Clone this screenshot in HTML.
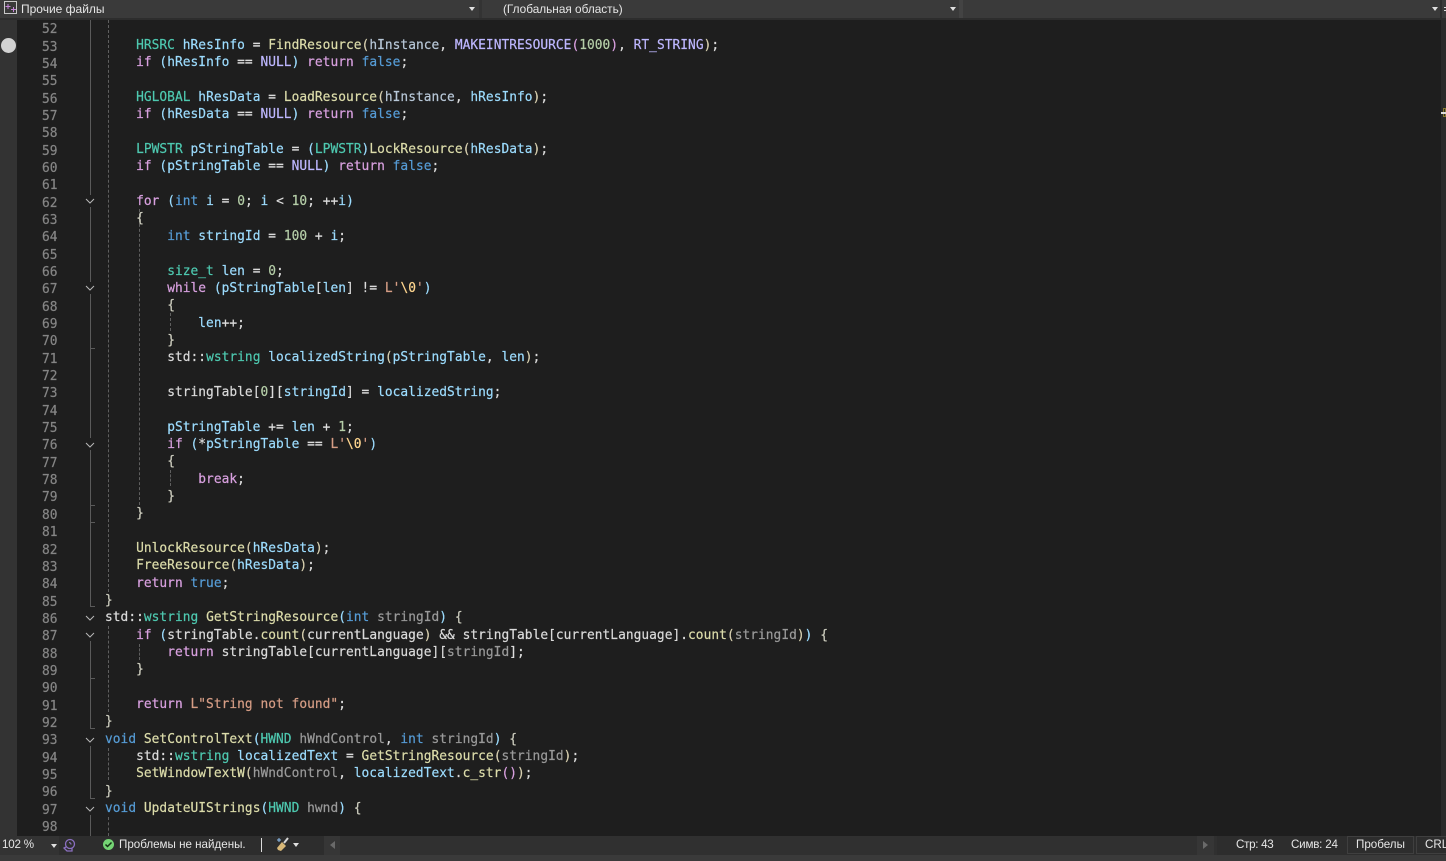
<!DOCTYPE html>
<html><head><meta charset="utf-8"><style>
html,body{margin:0;padding:0;background:#1e1e1e;width:1446px;height:861px;overflow:hidden}
.a{position:absolute}
pre{margin:0;font-family:"DejaVu Sans Mono",monospace;font-size:12.85px;line-height:17.34px;letter-spacing:.04px;color:#dcdcdc;-webkit-text-stroke:.2px}
.ui{font-family:"Liberation Sans",sans-serif;font-size:11.6px;line-height:14px;color:#e6e6e6;white-space:nowrap}
.k{color:#d8a0df}.b{color:#569cd6}.t{color:#4ec9b0}.f{color:#dcdcaa}.v{color:#9cdcfe}.m{color:#beb7ff}.p{color:#9a9a9a}.s{color:#d69d85}.n{color:#b5cea8}.g{color:#dadada}.y{color:#d8d0b0}.q{color:#ffd68f}.e{color:#cfcfc0}.h{color:#b8c8d8}
.fl{position:absolute;left:90px;width:1px;background:#5a5a5a}
.tk{position:absolute;left:90px;width:5px;height:1px;background:#5a5a5a}
.dg{position:absolute;width:0;border-left:1px dashed #5f5f5f}
.ar{position:absolute;width:0;height:0;border-left:3.5px solid transparent;border-right:3.5px solid transparent;border-top:4px solid #e0e0e0}
</style></head><body>
<div class="a" style="left:0;top:0;width:17px;height:861px;background:#333"></div>
<div class="a" style="left:1441px;top:20px;width:5px;height:816px;background:#2a2a2a"></div>
<div class="a" style="left:1443px;top:108px;width:3px;height:9px;border:1px solid #8a7a30;box-sizing:border-box"></div>
<div class="a" style="left:1441px;top:112px;width:5px;height:2px;background:#ddd"></div>
<div class="a" style="left:1px;top:38px;width:15px;height:15px;border-radius:50%;background:#d2d2d2"></div>

<pre class="a" style="left:42px;top:21.2px;color:#858585;height:815px;overflow:hidden">52
53
54
55
56
57
58
59
60
61
62
63
64
65
66
67
68
69
70
71
72
73
74
75
76
77
78
79
80
81
82
83
84
85
86
87
88
89
90
91
92
93
94
95
96
97
98</pre>

<div class="fl" style="top:20px;height:175px"></div>
<div class="fl" style="top:207px;height:75px"></div>
<div class="fl" style="top:294px;height:144px"></div>
<div class="fl" style="top:450px;height:156px"></div>
<div class="tk" style="top:348px"></div><div class="tk" style="top:505px"></div><div class="tk" style="top:522px"></div><div class="tk" style="top:606px"></div>
<div class="fl" style="top:641px;height:87px"></div><div class="tk" style="top:678px"></div><div class="tk" style="top:728px"></div>
<div class="fl" style="top:746px;height:52px"></div><div class="tk" style="top:798px"></div>
<div class="fl" style="top:815px;height:21px"></div>
<svg class="a" style="left:84px;top:0" width="13" height="836" fill="none" stroke="#b8b8b8" stroke-width="1">
<path d="M2 199l4 4 4-4M2 286l4 4 4-4M2 443l4 4 4-4M2 616l4 4 4-4M2 633l4 4 4-4M2 738l4 4 4-4M2 807l4 4 4-4"/></svg>
<div class="dg" style="left:108px;top:20px;height:572px"></div>
<div class="dg" style="left:108px;top:626px;height:86px"></div>
<div class="dg" style="left:108px;top:748px;height:32px"></div>
<div class="dg" style="left:108px;top:817px;height:19px"></div>
<div class="dg" style="left:139px;top:209px;height:296px"></div>
<div class="dg" style="left:139px;top:644px;height:16px"></div>
<div class="dg" style="left:170px;top:313px;height:18px"></div>
<div class="dg" style="left:170px;top:470px;height:16px"></div>

<pre class="a" style="left:105px;top:19.7px;height:816px;overflow:hidden">

    <span class="t">HRSRC</span> <span class="v">hResInfo</span> = <span class="f">FindResource</span><span class="y">(</span><span class="h">hInstance</span>, <span class="m">MAKEINTRESOURCE</span><span class="k">(</span><span class="n">1000</span><span class="k">)</span>, <span class="m">RT_STRING</span><span class="y">)</span>;
    <span class="k">if</span> <span class="v">(</span><span class="v">hResInfo</span> == <span class="m">NULL</span><span class="v">)</span> <span class="k">return</span> <span class="b">false</span>;

    <span class="t">HGLOBAL</span> <span class="v">hResData</span> = <span class="f">LoadResource</span><span class="y">(</span><span class="h">hInstance</span>, <span class="v">hResInfo</span><span class="y">)</span>;
    <span class="k">if</span> <span class="v">(</span><span class="v">hResData</span> == <span class="m">NULL</span><span class="v">)</span> <span class="k">return</span> <span class="b">false</span>;

    <span class="t">LPWSTR</span> <span class="v">pStringTable</span> = <span class="v">(</span><span class="t">LPWSTR</span><span class="v">)</span><span class="f">LockResource</span><span class="y">(</span><span class="v">hResData</span><span class="y">)</span>;
    <span class="k">if</span> <span class="v">(</span><span class="v">pStringTable</span> == <span class="m">NULL</span><span class="v">)</span> <span class="k">return</span> <span class="b">false</span>;

    <span class="k">for</span> <span class="v">(</span><span class="b">int</span> <span class="v">i</span> = <span class="n">0</span>; <span class="v">i</span> &lt; <span class="n">10</span>; ++<span class="v">i</span><span class="v">)</span>
    <span class="e">{</span>
        <span class="b">int</span> <span class="v">stringId</span> = <span class="n">100</span> + <span class="v">i</span>;

        <span class="t">size_t</span> <span class="v">len</span> = <span class="n">0</span>;
        <span class="k">while</span> <span class="v">(</span><span class="v">pStringTable</span>[<span class="v">len</span>] != <span class="s">L'</span><span class="q">\0</span><span class="s">'</span><span class="v">)</span>
        <span class="e">{</span>
            <span class="v">len</span>++;
        <span class="e">}</span>
        <span class="g">std</span>::<span class="t">wstring</span> <span class="v">localizedString</span><span class="y">(</span><span class="v">pStringTable</span>, <span class="v">len</span><span class="y">)</span>;

        <span class="g">stringTable</span>[<span class="n">0</span>][<span class="v">stringId</span>] = <span class="v">localizedString</span>;

        <span class="v">pStringTable</span> += <span class="v">len</span> + <span class="n">1</span>;
        <span class="k">if</span> <span class="v">(</span>*<span class="v">pStringTable</span> == <span class="s">L'</span><span class="q">\0</span><span class="s">'</span><span class="v">)</span>
        <span class="e">{</span>
            <span class="k">break</span>;
        <span class="e">}</span>
    <span class="e">}</span>

    <span class="f">UnlockResource</span><span class="y">(</span><span class="v">hResData</span><span class="y">)</span>;
    <span class="f">FreeResource</span><span class="y">(</span><span class="v">hResData</span><span class="y">)</span>;
    <span class="k">return</span> <span class="b">true</span>;
<span class="e">}</span>
<span class="g">std</span>::<span class="t">wstring</span> <span class="f">GetStringResource</span><span class="v">(</span><span class="b">int</span> <span class="p">stringId</span><span class="v">)</span> <span class="e">{</span>
    <span class="k">if</span> <span class="v">(</span><span class="g">stringTable</span>.<span class="f">count</span><span class="y">(</span><span class="g">currentLanguage</span><span class="y">)</span> &amp;&amp; <span class="g">stringTable</span>[<span class="g">currentLanguage</span>].<span class="f">count</span><span class="y">(</span><span class="p">stringId</span><span class="y">)</span><span class="v">)</span> <span class="e">{</span>
        <span class="k">return</span> <span class="g">stringTable</span>[<span class="g">currentLanguage</span>][<span class="p">stringId</span>];
    <span class="e">}</span>

    <span class="k">return</span> <span class="s">L"String not found"</span>;
<span class="e">}</span>
<span class="b">void</span> <span class="f">SetControlText</span><span class="v">(</span><span class="t">HWND</span> <span class="p">hWndControl</span>, <span class="b">int</span> <span class="p">stringId</span><span class="v">)</span> <span class="e">{</span>
    <span class="g">std</span>::<span class="t">wstring</span> <span class="v">localizedText</span> = <span class="f">GetStringResource</span><span class="y">(</span><span class="p">stringId</span><span class="y">)</span>;
    <span class="f">SetWindowTextW</span><span class="y">(</span><span class="p">hWndControl</span>, <span class="v">localizedText</span>.<span class="f">c_str</span><span class="k">()</span><span class="y">)</span>;
<span class="e">}</span>
<span class="b">void</span> <span class="f">UpdateUIStrings</span><span class="v">(</span><span class="t">HWND</span> <span class="p">hwnd</span><span class="v">)</span> <span class="e">{</span>
</pre>

<!-- top bar -->
<div class="a" style="left:0;top:0;width:1446px;height:20px;background:#2d2d2d"></div>
<div class="a" style="left:0;top:0;width:1446px;height:18px;background:#3a3a3a"></div>
<div class="a" style="left:479px;top:0;width:3px;height:18px;background:#333"></div>
<div class="a" style="left:959px;top:0;width:4px;height:18px;background:#434343"></div>
<div class="a" style="left:1440px;top:0;width:2px;height:18px;background:#2d2d2d"></div>
<svg class="a" style="left:4px;top:1px" width="14" height="14" fill="none"><rect x=".5" y=".5" width="12" height="12" stroke="#c8c8c8"/><path d="M4 3v5M1.500 5.500h5" stroke="#c586d8"/><path d="M9.500 6v5M7 8.500h5" stroke="#c586d8"/></svg>
<div class="a ui" style="left:21px;top:2px;font-size:12px">Прочие файлы</div>
<div class="a ui" style="left:503px;top:2px;font-size:11.8px">(Глобальная область)</div>
<div class="ar" style="left:469px;top:7px"></div>
<div class="ar" style="left:950px;top:7px"></div>
<div class="ar" style="left:1432px;top:7px"></div>
<div class="a" style="left:1444px;top:7px;width:2px;height:1px;background:#ddd"></div>
<div class="a" style="left:1444px;top:10px;width:2px;height:1px;background:#ddd"></div>

<!-- status bar -->
<div class="a" style="left:0;top:836px;width:1446px;height:19px;background:#2d2d2d"></div>
<div class="a" style="left:0;top:855px;width:1446px;height:6px;background:#3a3a3a"></div>
<div class="a" style="left:0;top:836px;width:59px;height:19px;background:#333"></div>
<div class="a ui" style="left:2px;top:838px;font-size:11.6px;letter-spacing:-.2px">102 %</div>
<div class="ar" style="left:51px;top:844px"></div>
<svg class="a" style="left:62px;top:838px" width="14" height="14" fill="none" stroke="#8a6fc0" stroke-width="1.3"><circle cx="8" cy="6" r="4.500"/><path d="M4 9l-2 1 3 3h5v-3M7 4.500a2 2 0 0 1 2 2"/></svg>
<svg class="a" style="left:102px;top:838px" width="13" height="13"><circle cx="6.500" cy="6.500" r="5.500" fill="#74d474"/><path d="M3.500 6.500l2 2 4-4" stroke="#143014" stroke-width="1.500" fill="none"/></svg>
<div class="a ui" style="left:119px;top:838px">Проблемы не найдены.</div>
<div class="a" style="left:261px;top:838px;width:1px;height:14px;background:#ddd"></div>
<svg class="a" style="left:276px;top:837px" width="15" height="15" fill="none"><path d="M1 11l5-6 4 4-5 5-3-1z" fill="#d8b878"/><path d="M8 6l4-5" stroke="#d8d8d8" stroke-width="2"/><path d="M3 1v4M1 3h4" stroke="#8fc0f0"/></svg>
<div class="ar" style="left:293px;top:843px"></div>
<div class="a" style="left:324px;top:836px;width:893px;height:19px;background:#303030"></div>
<div class="a" style="left:324px;top:836px;width:16px;height:19px;background:#363636"></div>
<div class="a" style="left:1197px;top:836px;width:17px;height:19px;background:#363636"></div>
<div class="a" style="left:330px;top:841px;width:0;height:0;border-top:4.500px solid transparent;border-bottom:4.500px solid transparent;border-right:5px solid #6a6a6a"></div>
<div class="a" style="left:1203px;top:841px;width:0;height:0;border-top:4.500px solid transparent;border-bottom:4.500px solid transparent;border-left:5px solid #6a6a6a"></div>
<div class="a ui" style="left:1236px;top:838px;letter-spacing:-.3px">Стр: 43</div>
<div class="a ui" style="left:1291px;top:838px;letter-spacing:-.2px">Симв: 24</div>
<div class="a" style="left:1347px;top:836px;width:67px;height:18px;border:1px solid #3f3f3f;box-sizing:border-box"></div>
<div class="a" style="left:1416px;top:836px;width:30px;height:18px;border:1px solid #3f3f3f;border-right:0;box-sizing:border-box"></div>
<div class="a ui" style="left:1356px;top:838px">Пробелы</div>
<div class="a ui" style="left:1425px;top:838px">CRLF</div>
</body></html>
